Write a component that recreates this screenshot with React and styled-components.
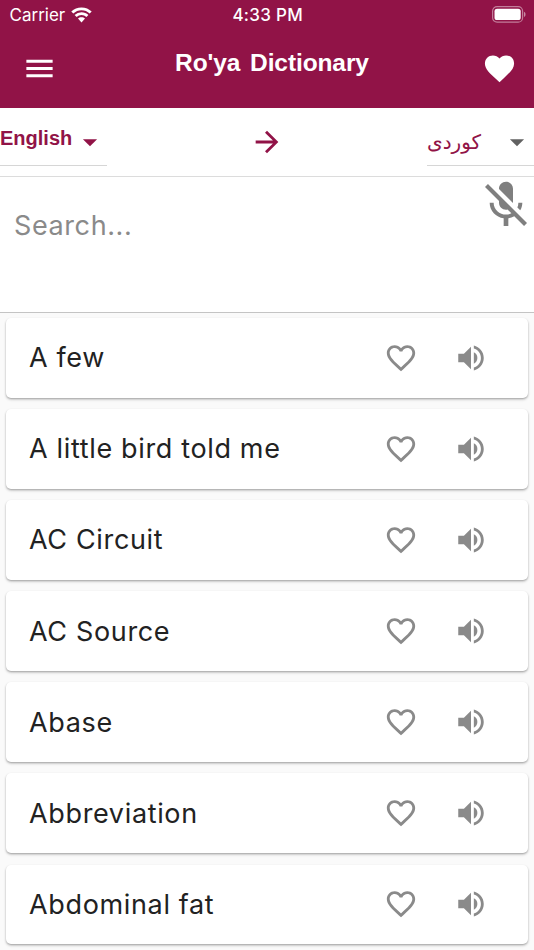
import React from "react";
import styled, { createGlobalStyle } from "styled-components";
import {
  MdArrowDropDown,
  MdArrowForward,
  MdFavorite,
  MdFavoriteBorder,
  MdMenu,
  MdMicOff,
  MdVolumeUp
} from "react-icons/md";

const words = [
  "A few",
  "A little bird told me",
  "AC Circuit",
  "AC Source",
  "Abase",
  "Abbreviation",
  "Abdominal fat"
];

const Word = props => {
  const { children } = props;

  return (
    <Card>
      <Label>{children}</Label>
      <IconButton aria-label="Favorite">
        <MdFavoriteBorder size={34} />
      </IconButton>
      <IconButton aria-label="Listen">
        <MdVolumeUp size={34} />
      </IconButton>
    </Card>
  );
};

const App = () => (
  <Screen>
    <GlobalStyle />
    <Header>
      <StatusBar>
        <Carrier>
          <span>Carrier</span>
          <Wifi />
        </Carrier>
        <Time>4:33 PM</Time>
        <Battery />
      </StatusBar>
      <Toolbar>
        <ToolButton aria-label="Menu">
          <MdMenu size={35} />
        </ToolButton>
        <Title>Ro'ya Dictionary</Title>
        <ToolButton aria-label="Favorites">
          <MdFavorite size={35} />
        </ToolButton>
      </Toolbar>
    </Header>
    <Languages>
      <Language>
        <English>English</English>
        <MdArrowDropDown size={34} />
      </Language>
      <MdArrowForward size={34} />
      <Language $target>
        <Kurdish lang="ckb" dir="rtl">کوردی</Kurdish>
        <MdArrowDropDown size={34} />
      </Language>
    </Languages>
    <Search>
      <Input placeholder="Search..." />
      <MdMicOff size={56} />
    </Search>
    <List>
      {words.map(word => (
        <Word key={word}>{word}</Word>
      ))}
    </List>
  </Screen>
);

const Wifi = () => (
  <svg width="21" height="16" viewBox="0 0 21 16" fill="#fff">
    <path d="M10.5.4c4 0 7.7 1.6 10.2 4.1l-2 2.1a11.7 11.7 0 0 0-16.4 0l-2-2.1A14.6 14.6 0 0 1 10.5.4z" />
    <path d="M10.5 5.3c2.7 0 5.1 1 6.9 2.7l-2 2.1a7 7 0 0 0-9.8 0l-2-2.1a10 10 0 0 1 6.9-2.7z" />
    <path d="M10.5 10.2c1.4 0 2.6.5 3.5 1.4l-3.5 3.9L7 11.6c.9-.9 2.1-1.4 3.5-1.4z" />
  </svg>
);

const Battery = () => (
  <svg width="34" height="17" viewBox="0 0 34 17">
    <rect x=".6" y=".6" width="30" height="15.6" rx="4.5" fill="none" stroke="#fff" strokeOpacity=".45" strokeWidth="1.2" />
    <rect x="2.5" y="2.7" width="26.2" height="11.4" rx="2.6" fill="#fff" />
    <path d="M32 5.8c2 .8 2 4.4 0 5.2z" fill="#fff" fillOpacity=".5" />
  </svg>
);

export default App;

const GlobalStyle = createGlobalStyle`
  * {
    box-sizing: border-box;
  }

  body {
    margin: 0;
    background-color: #fafafa;
    font-family: Inter, "Liberation Sans", sans-serif;
  }

  svg {
    display: block;
    flex: none;
  }
`;

const Screen = styled.div`
  display: flex;
  flex-direction: column;
  width: 534px;
  height: 950px;
  overflow: hidden;
`;

const Header = styled.header`
  flex: none;
  height: 108px;
  color: #fff;
  background-color: #911347;
`;

const StatusBar = styled.div`
  display: grid;
  grid-template-columns: 1fr auto 1fr;
  align-items: center;
  height: 29px;
  padding: 0 8px 0 9.5px;

  > :last-child {
    justify-self: end;
  }
`;

const Carrier = styled.div`
  display: flex;
  align-items: center;
  gap: 6px;
  font-size: 17px;
`;

const Time = styled.div`
  font-size: 17px;
  font-weight: 500;
  letter-spacing: 0.3px;
`;

const Toolbar = styled.div`
  display: flex;
  justify-content: space-between;
  height: 79px;
  padding: 0 17px 0 22px;
`;

const ToolButton = styled.button`
  height: 79px;
  padding: 0;
  border: 0;
  color: inherit;
  background: none;
`;

const Title = styled.h1`
  margin: 18px 0 0 5px;
  font: bold 24.5px/32px "Liberation Sans", sans-serif;
  letter-spacing: -0.1px;
  word-spacing: 3px;
`;

const Languages = styled.div`
  display: flex;
  align-items: center;
  justify-content: space-between;
  flex: none;
  height: 69px;
  border-bottom: 1px solid #dcdcdc;
  color: #911347;
  background-color: #fff;
`;

const Language = styled.div`
  display: flex;
  align-items: center;
  justify-content: space-between;
  width: 107px;
  height: 46px;
  margin-top: 1px;
  border-bottom: 1px solid #d6d6d6;

  svg {
    color: ${props => (props.$target ? "#616161" : "#911347")};
  }
`;

const English = styled.span`
  padding-bottom: 9px;
  font: bold 20px/24px "Liberation Sans", sans-serif;
`;

const Kurdish = styled.span`
  padding-bottom: 1px;
  font: 20px/30px "DejaVu Sans", sans-serif;
`;

const Search = styled.div`
  display: flex;
  justify-content: space-between;
  flex: none;
  height: 136px;
  border-bottom: 1px solid #c4c4c4;
  color: #7f7f7f;
  background-color: #fff;
`;

const Input = styled.input`
  flex: 1;
  min-width: 0;
  height: 96px;
  padding: 0 0 0 14px;
  border: 0;
  outline: 0;
  background: none;
  font: 400 27px Inter, sans-serif;
  letter-spacing: 0.6px;

  &::placeholder {
    color: #8a8a8a;
    opacity: 1;
  }
`;

const List = styled.main`
  display: flex;
  flex-direction: column;
  gap: 11.6px;
  padding: 5px 6px;
`;

const Card = styled.div`
  display: flex;
  align-items: center;
  flex: none;
  height: 79.5px;
  padding: 0 22px 0 23px;
  border-radius: 5px;
  background-color: #fff;
  box-shadow: 0 1px 2px rgba(0, 0, 0, 0.26), 0 2px 3px rgba(0, 0, 0, 0.12);
`;

const Label = styled.span`
  flex: 1;
  color: #222;
  font-size: 27px;
  font-weight: 400;
  letter-spacing: 0.65px;
`;

const IconButton = styled.button`
  display: flex;
  justify-content: center;
  width: 70px;
  padding: 0;
  border: 0;
  color: #8a8a8a;
  background: none;
`;
